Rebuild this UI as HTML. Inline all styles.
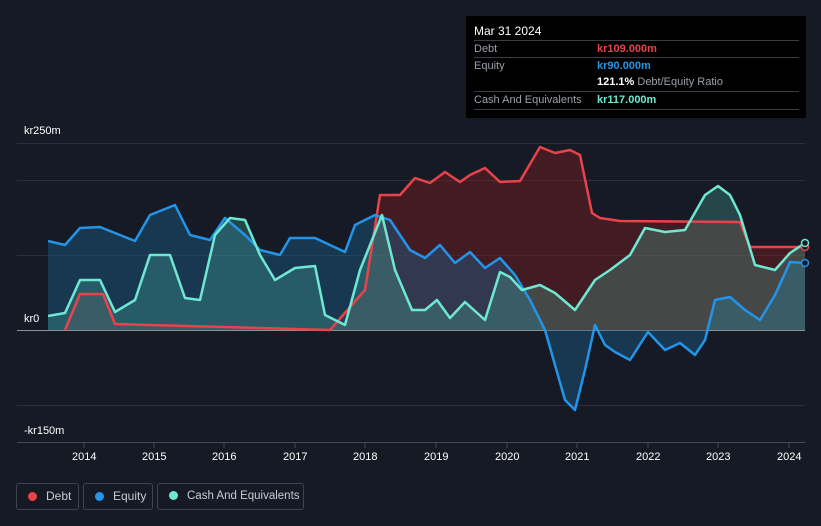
<!DOCTYPE html>
<html><head><meta charset="utf-8"><style>
html,body{margin:0;padding:0;background:#151a24;width:821px;height:526px;overflow:hidden;font-family:"Liberation Sans",sans-serif;}
.tip{position:absolute;left:466px;top:16px;width:340px;height:102px;background:#000;color:#fff;font-size:11px;}
.tip .h{position:absolute;left:8px;top:8px;font-size:12px;}
.row{position:absolute;left:8px;width:325px;border-top:1px solid #3a3d44;height:17px;line-height:17px;color:#9aa0a8;white-space:nowrap;}
.row span{position:absolute;left:123px;font-weight:bold;}
.leg{position:absolute;top:483px;height:27px;border:1px solid #3e434d;border-radius:3px;color:#c8ccd2;font-size:12px;line-height:25px;box-sizing:border-box;white-space:nowrap;}
.dot{display:inline-block;width:9px;height:9px;border-radius:50%;margin:0 9px 0 11px;vertical-align:-1px;}
.ax{position:absolute;color:#fff;font-size:11px;white-space:nowrap;}
</style></head><body>
<svg width="821" height="526" style="position:absolute;left:0;top:0">
<g stroke="#2a303b" stroke-width="1">
<line x1="17" y1="143.5" x2="805" y2="143.5"/><line x1="17" y1="180.5" x2="805" y2="180.5"/>
<line x1="17" y1="255.5" x2="805" y2="255.5"/><line x1="17" y1="405.5" x2="805" y2="405.5"/>
<line x1="17" y1="442.5" x2="805" y2="442.5" stroke="#444a55"/>
</g>
<line x1="17" y1="330.5" x2="805" y2="330.5" stroke="#8a8f98"/>
<g stroke="#444a55"><line x1="84" y1="443" x2="84" y2="448"/><line x1="154" y1="443" x2="154" y2="448"/><line x1="224" y1="443" x2="224" y2="448"/><line x1="295" y1="443" x2="295" y2="448"/><line x1="365" y1="443" x2="365" y2="448"/><line x1="436" y1="443" x2="436" y2="448"/><line x1="507" y1="443" x2="507" y2="448"/><line x1="577" y1="443" x2="577" y2="448"/><line x1="648" y1="443" x2="648" y2="448"/><line x1="718" y1="443" x2="718" y2="448"/><line x1="789" y1="443" x2="789" y2="448"/></g>
<polygon fill="#7a1e22" fill-opacity="0.45" points="65,330 80,294 103,294 115,324 330,330 365,290 380,195 400,195 415,178 430,183 445,172 460,182 470,175 485,168 500,182 520,181 540,147 555,153 570,150 580,155 592,213 600,218 620,221 740,222 750,247 805,247 805,330"/>
<polygon fill="#1c5a8a" fill-opacity="0.45" points="48,330 48,241 65,245 80,228 100,227 120,235 135,241 150,215 175,205 190,235 210,240 225,218 245,235 260,250 280,255 290,238 315,238 345,252 355,225 375,215 390,220 410,250 425,258 440,245 455,263 470,252 485,268 500,258 515,275 530,300 545,330 555,365 565,400 575,410 585,370 595,325 605,345 615,352 630,360 648,332 665,350 680,343 695,355 705,340 715,300 730,297 745,310 760,320 775,295 790,262 805,263 805,330"/>
<polygon fill="#4fb0a0" fill-opacity="0.3" points="48,330 48,316 65,313 80,280 100,280 115,312 135,300 150,255 170,255 185,298 200,300 215,235 230,218 245,220 260,255 275,280 295,268 315,266 325,315 345,325 360,270 382,215 395,270 412,310 425,310 437,300 450,318 465,302 485,320 500,272 510,277 522,290 540,285 555,293 575,310 595,280 610,270 630,255 645,228 665,232 685,230 705,195 718,186 730,195 740,215 755,265 775,270 790,253 805,243 805,330"/>
<g fill="none" stroke-width="2.5" stroke-linejoin="round">
<polyline stroke="#e8434a" points="65,330 80,294 103,294 115,324 330,330 365,290 380,195 400,195 415,178 430,183 445,172 460,182 470,175 485,168 500,182 520,181 540,147 555,153 570,150 580,155 592,213 600,218 620,221 740,222 750,247 805,247"/>
<polyline stroke="#2394e8" points="48,241 65,245 80,228 100,227 120,235 135,241 150,215 175,205 190,235 210,240 225,218 245,235 260,250 280,255 290,238 315,238 345,252 355,225 375,215 390,220 410,250 425,258 440,245 455,263 470,252 485,268 500,258 515,275 530,300 545,330 555,365 565,400 575,410 585,370 595,325 605,345 615,352 630,360 648,332 665,350 680,343 695,355 705,340 715,300 730,297 745,310 760,320 775,295 790,262 805,263"/>
<polyline stroke="#6ee8d2" points="48,316 65,313 80,280 100,280 115,312 135,300 150,255 170,255 185,298 200,300 215,235 230,218 245,220 260,255 275,280 295,268 315,266 325,315 345,325 360,270 382,215 395,270 412,310 425,310 437,300 450,318 465,302 485,320 500,272 510,277 522,290 540,285 555,293 575,310 595,280 610,270 630,255 645,228 665,232 685,230 705,195 718,186 730,195 740,215 755,265 775,270 790,253 805,243"/>
</g>
<circle cx="805" cy="247" r="3.5" fill="#151a24" stroke="#e8434a" stroke-width="1.5"/>
<circle cx="805" cy="263" r="3.5" fill="#151a24" stroke="#2394e8" stroke-width="1.5"/>
<circle cx="805" cy="243" r="3.5" fill="#151a24" stroke="#6ee8d2" stroke-width="1.5"/>
</svg>
<div class="ax" style="left:24px;top:125px">kr250m</div>
<div class="ax" style="left:24px;top:313px">kr0</div>
<div class="ax" style="left:24px;top:425px">-kr150m</div>
<div class="ax" style="left:72px;top:451px">2014</div><div class="ax" style="left:142px;top:451px">2015</div><div class="ax" style="left:212px;top:451px">2016</div><div class="ax" style="left:283px;top:451px">2017</div><div class="ax" style="left:353px;top:451px">2018</div><div class="ax" style="left:424px;top:451px">2019</div><div class="ax" style="left:495px;top:451px">2020</div><div class="ax" style="left:565px;top:451px">2021</div><div class="ax" style="left:636px;top:451px">2022</div><div class="ax" style="left:706px;top:451px">2023</div><div class="ax" style="left:777px;top:451px">2024</div>
<div class="tip"><div class="h">Mar 31 2024</div>
<div class="row" style="top:24px">Debt<span style="color:#e8434a">kr109.000m</span></div>
<div class="row" style="top:41px">Equity<span style="color:#2394e8">kr90.000m</span></div>
<div class="row" style="top:58px;border-top:none"><span style="color:#fff">121.1% <b style="color:#9aa0a8;font-weight:normal">Debt/Equity Ratio</b></span></div>
<div class="row" style="top:75px">Cash And Equivalents<span style="color:#6ee8d2">kr117.000m</span></div>
<div class="row" style="top:93px;height:0"></div>
</div>
<div class="leg" style="left:16px;width:63px"><span class="dot" style="background:#e8434a"></span>Debt</div>
<div class="leg" style="left:83px;width:70px"><span class="dot" style="background:#2394e8"></span>Equity</div>
<div class="leg" style="left:157px;width:147px;font-size:11.5px"><span class="dot" style="background:#6ee8d2"></span>Cash And Equivalents</div>
</body></html>
